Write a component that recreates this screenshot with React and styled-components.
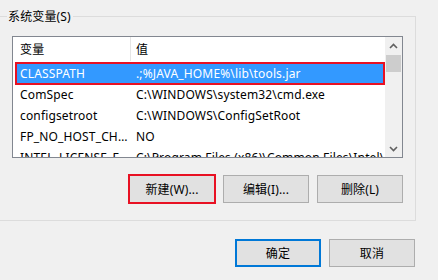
import styled, { createGlobalStyle } from 'styled-components'

const GlobalStyle = createGlobalStyle`
  html, body {
    margin: 0;
    padding: 0;
    background: #f0f0f0;
  }
  body {
    font-family: "Noto Sans", "Noto Sans CJK SC", sans-serif;
    font-size: 12px;
    letter-spacing: 0.15px;
    color: #000;
  }
`

const Window = styled.div`
  width: 438px;
  height: 280px;
  overflow: hidden;
  background: #f0f0f0;
  display: flex;
  flex-direction: column;
`

const Group = styled.div`
  margin: 16px 22px 0 0;
  height: 205px;
  box-sizing: border-box;
  border: 1px solid #dcdcdc;
  border-left: none;
  padding: 0 12px 0 12px;
  display: flex;
  flex-direction: column;
`

const GroupTitle = styled.div`
  margin: -9px 0 0 -5px;
  padding: 0 2px 0 1px;
  width: fit-content;
  line-height: 18px;
  background: #f0f0f0;
`

const ListBox = styled.div`
  margin-top: 10px;
  width: 391px;
  height: 122px;
  box-sizing: border-box;
  border: 1px solid #828790;
  background: #fff;
  display: flex;
  overflow: hidden;
`

const ListBody = styled.div`
  flex: 1;
  min-width: 0;
  display: flex;
  flex-direction: column;
`

const Header = styled.div`
  display: flex;
  height: 26px;
  flex-shrink: 0;
  align-items: stretch;
`

const HeaderCell = styled.div`
  display: flex;
  align-items: center;
  box-sizing: border-box;
  width: ${(p) => (p.$first ? '118px' : 'auto')};
  flex: ${(p) => (p.$first ? 'none' : '1')};
  padding-left: ${(p) => (p.$first ? '7px' : '5px')};
  border-right: ${(p) => (p.$first ? '1px solid #e5e5e5' : 'none')};
  margin-bottom: 2px;
`

const Row = styled.div`
  display: flex;
  align-items: center;
  height: 21px;
  flex-shrink: 0;
  box-sizing: border-box;
  margin: 0 1px 0 3px;
  white-space: nowrap;
  background: ${(p) => (p.$selected ? '#3399ff' : 'transparent')};
  color: ${(p) => (p.$selected ? '#fff' : '#000')};
  outline: ${(p) => (p.$selected ? '2px solid #e81123' : 'none')};
  outline-offset: -1px;
  border-right: ${(p) => (p.$selected ? '1px dotted #e0a060' : 'none')};
  border-bottom: ${(p) => (p.$selected ? '1px dotted #e0a060' : 'none')};
`

const Cell = styled.div`
  box-sizing: border-box;
  overflow: hidden;
  text-overflow: ${(p) => (p.$first ? 'ellipsis' : 'clip')};
  width: ${(p) => (p.$first ? '113px' : 'auto')};
  flex: ${(p) => (p.$first ? 'none' : '1')};
  padding-left: 4px;
  margin-right: ${(p) => (p.$first ? '3px' : '0')};
`

const ScrollBar = styled.div`
  width: 17px;
  flex-shrink: 0;
  background: #f0f0f0;
  display: flex;
  flex-direction: column;
`

const ScrollArrow = styled.div`
  height: 17px;
  display: flex;
  align-items: center;
  justify-content: center;
`

const ScrollTrack = styled.div`
  flex: 1;
  padding: 1px 1px 0 1px;
`

const Thumb = styled.div`
  height: 17px;
  background: #cdcdcd;
`

const ButtonRow = styled.div`
  display: flex;
  justify-content: flex-end;
  gap: 8px;
  margin-top: ${(p) => p.$top || 17}px;
  padding-right: ${(p) => p.$right || 0}px;
`

const Button = styled.div`
  width: 86px;
  height: 28px;
  box-sizing: border-box;
  display: flex;
  align-items: center;
  justify-content: center;
  background: #e1e1e1;
  border: ${(p) => (p.$default ? '2px solid #0078d7' : '1px solid #adadad')};
  outline: ${(p) => (p.$marked ? '2px solid #e81123' : 'none')};
  outline-offset: -1px;
`

const Chevron = ({ down }) => (
  <svg width="9" height="6" viewBox="0 0 9 6">
    <polyline
      points={down ? '1,1 4.5,4.5 8,1' : '1,5 4.5,1.5 8,5'}
      fill="none"
      stroke="#606060"
      strokeWidth="1.6"
    />
  </svg>
)

const rows = [
  ['CLASSPATH', '.;%JAVA_HOME%\\lib\\tools.jar'],
  ['ComSpec', 'C:\\WINDOWS\\system32\\cmd.exe'],
  ['configsetroot', 'C:\\WINDOWS\\ConfigSetRoot'],
  ['FP_NO_HOST_CHECK', 'NO'],
  ['INTEL_LICENSE_FILE', 'C:\\Program Files (x86)\\Common Files\\Intel\\Licenses'],
]

export default function App() {
  return (
    <Window>
      <GlobalStyle />
      <Group>
        <GroupTitle>系统变量(S)</GroupTitle>
        <ListBox>
          <ListBody>
            <Header>
              <HeaderCell $first>变量</HeaderCell>
              <HeaderCell>值</HeaderCell>
            </Header>
            {rows.map(([name, value], i) => (
              <Row key={name} $selected={i === 0}>
                <Cell $first>{name}</Cell>
                <Cell>{value}</Cell>
              </Row>
            ))}
          </ListBody>
          <ScrollBar>
            <ScrollArrow>
              <Chevron />
            </ScrollArrow>
            <ScrollTrack>
              <Thumb />
            </ScrollTrack>
            <ScrollArrow>
              <Chevron down />
            </ScrollArrow>
          </ScrollBar>
        </ListBox>
        <ButtonRow>
          <Button $marked>新建(W)...</Button>
          <Button>编辑(I)...</Button>
          <Button>删除(L)</Button>
        </ButtonRow>
      </Group>
      <ButtonRow $top={18} $right={23}>
        <Button $default>确定</Button>
        <Button>取消</Button>
      </ButtonRow>
    </Window>
  )
}
